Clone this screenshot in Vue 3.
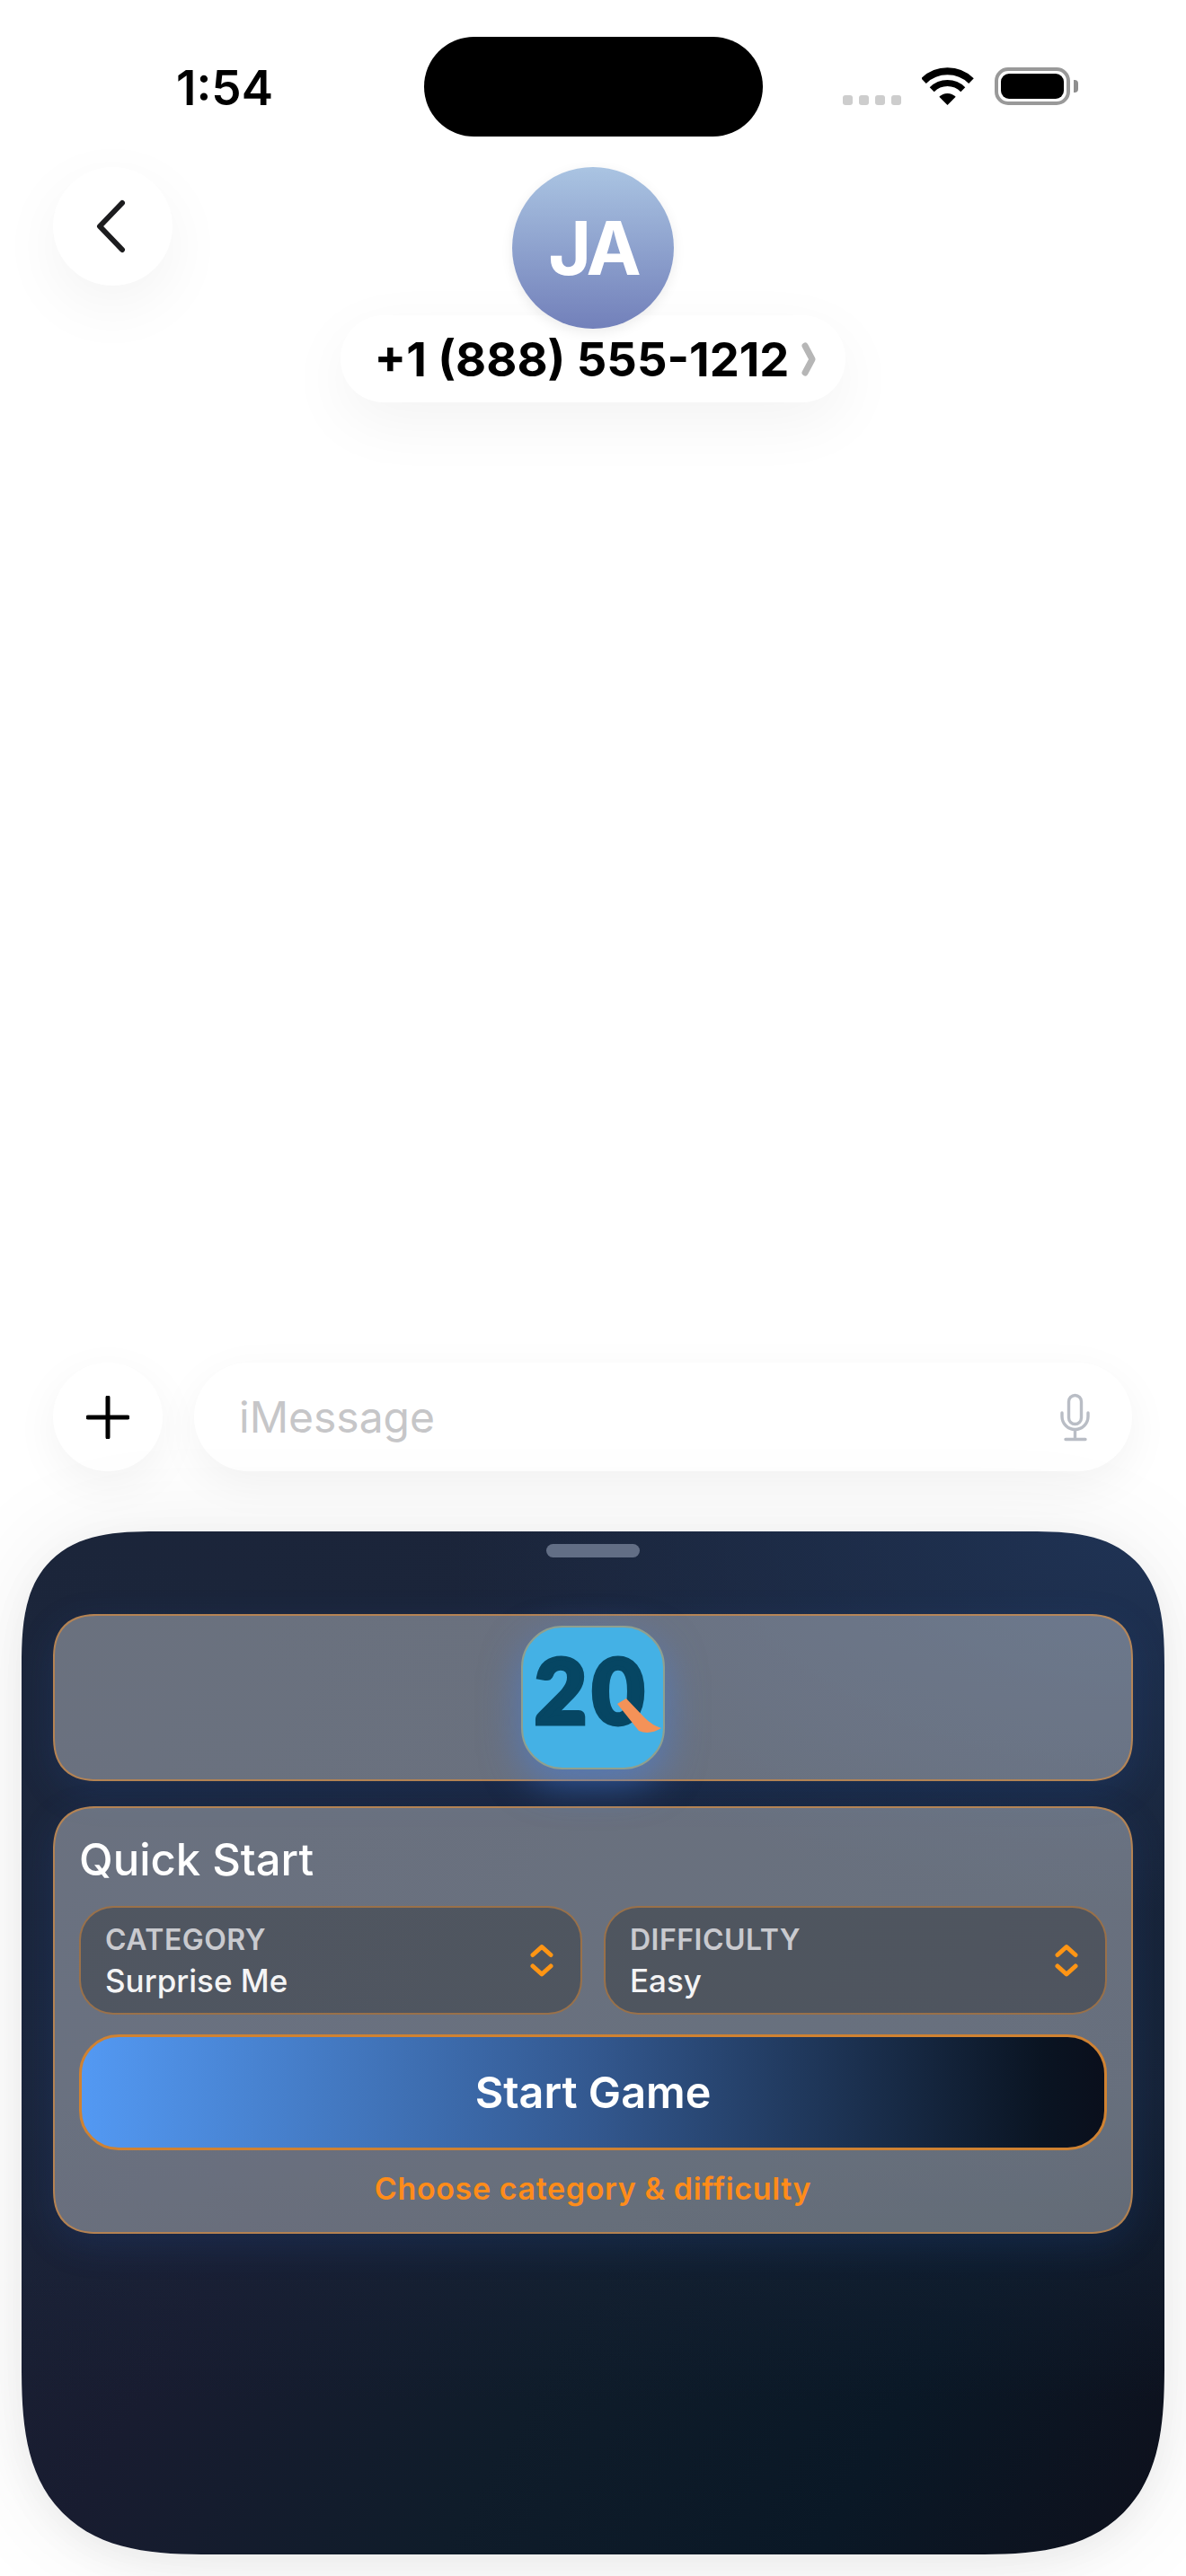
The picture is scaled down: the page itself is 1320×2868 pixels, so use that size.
<script setup>
const selects = [
  { label: 'CATEGORY', value: 'Surprise Me' },
  { label: 'DIFFICULTY', value: 'Easy' },
]
</script>

<template>
  <div class="screen">
    <div class="status">
      <div class="time-wrap"><span class="time">1:54</span></div>
      <div class="island"></div>
      <div class="status-right">
        <div class="dots"><i></i><i></i><i></i><i></i></div>
        <svg class="wifi" width="58" height="42" viewBox="0 0 58 42">
          <path d="M2 15.1 A38 38 0 0 1 55 15.1" fill="none" stroke="#000" stroke-width="8" />
          <path d="M11.2 24.7 A24.5 24.5 0 0 1 45.8 24.7" fill="none" stroke="#000" stroke-width="7" />
          <path d="M28.5 42 L19.3 32.8 A13 13 0 0 1 37.7 32.8 Z" fill="#000" />
        </svg>
        <div class="battery"><div class="battery-fill"></div></div>
        <div class="battery-nub"></div>
      </div>
    </div>

    <header class="head">
      <div class="head-left">
        <button class="round back" aria-label="Back">
          <svg width="36" height="60" viewBox="0 0 36 60">
            <path d="M31 4 L6 30 L31 56" fill="none" stroke="#1c1c1e" stroke-width="6" stroke-linecap="round" stroke-linejoin="round" />
          </svg>
        </button>
      </div>
      <div class="contact">
        <div class="avatar">JA</div>
        <div class="phone">
          <span>+1 (888) 555-1212</span>
          <svg width="16" height="38" viewBox="0 0 16 38">
            <path d="M4 4 L12 19 L4 34" fill="none" stroke="#b6b6b6" stroke-width="7" stroke-linecap="round" stroke-linejoin="round" />
          </svg>
        </div>
      </div>
      <div></div>
    </header>

    <div class="composer">
      <button class="round plus" aria-label="Add">
        <svg width="48" height="48" viewBox="0 0 48 48">
          <path d="M24 2 V46 M2 24 H46" stroke="#000" stroke-width="5" stroke-linecap="round" />
        </svg>
      </button>
      <div class="input">
        <span>iMessage</span>
        <svg width="36" height="54" viewBox="0 0 36 54" fill="none" stroke="#b9bdc5" stroke-width="3.4" stroke-linecap="round">
          <rect x="10.5" y="2.5" width="14" height="32" rx="7" />
          <path d="M3 22 V26 A14.5 14.5 0 0 0 32 26 V22" />
          <path d="M17.5 41 V51 M7 51.5 H29" />
        </svg>
      </div>
    </div>

    <section class="sheet">
      <div class="grabber"></div>
      <div class="card app-row">
        <div class="app-icon">
          <span class="logo-text">20</span>
          <svg class="logo-tail" width="160" height="160" viewBox="0 0 160 160">
            <path d="M107 87 L117 81 L137 102 Q146 111 156 114 Q143 122 131 117 Z" fill="#f49258" />
          </svg>
        </div>
      </div>
      <div class="card quick">
        <h2>Quick Start</h2>
        <div class="selects">
          <div v-for="s in selects" :key="s.label" class="select">
            <div class="select-text">
              <span class="select-label">{{ s.label }}</span>
              <span class="select-value">{{ s.value }}</span>
            </div>
            <svg width="26" height="38" viewBox="0 0 26 38" fill="none" stroke="#ff9514" stroke-width="5" stroke-linecap="round" stroke-linejoin="round">
              <path d="M3 12.5 L13 3.5 L23 12.5 M3 25 L13 34 L23 25" />
            </svg>
          </div>
        </div>
        <button class="start">Start Game</button>
        <p class="hint">Choose category &amp; difficulty</p>
      </div>
    </section>
  </div>
</template>

<style>
html, body { margin: 0; background: #fff; }
</style>

<style scoped>
.screen {
  width: 1320px;
  height: 2868px;
  display: flex;
  flex-direction: column;
  overflow: hidden;
  font-family: Inter, "Noto Sans", sans-serif;
  background: #fff;
}
.status {
  display: grid;
  grid-template-columns: 1fr 377px 1fr;
  padding-top: 41px;
  height: 111px;
  box-sizing: content-box;
}
.time-wrap { padding: 28px 0 0 196px; }
.time { font-size: 53px; line-height: 58px; font-weight: 600; color: #000; display: block; }
.island { background: #000; border-radius: 56px; height: 111px; }
.status-right { display: flex; align-items: flex-start; padding: 34px 0 0 89px; }
.dots { display: flex; gap: 7px; margin-top: 31px; }
.dots i { width: 11px; height: 11px; border-radius: 3px; background: #cdcdcd; }
.wifi { margin-left: 23px; }
.battery {
  margin-left: 23px;
  width: 84px;
  height: 42px;
  box-sizing: border-box;
  border: 4px solid #999;
  border-radius: 15px;
  padding: 3px;
}
.battery-fill { height: 100%; background: #000; border-radius: 9px; }
.battery-nub { width: 5px; height: 14px; margin: 14px 0 0 4px; background: #8f8f8f; border-radius: 0 4px 4px 0; }

.head {
  display: grid;
  grid-template-columns: 1fr auto 1fr;
  margin-top: 34px;
}
.head-left { padding-left: 59px; }
.round {
  border: 0;
  padding: 0;
  background: #fff;
  border-radius: 50%;
  display: flex;
  align-items: center;
  justify-content: center;
}
.back {
  width: 133px;
  height: 132px;
  box-shadow: 0 22px 70px rgba(0, 0, 0, .05);
}
.back svg { margin-left: -6px; }
.contact { display: flex; flex-direction: column; align-items: center; }
.avatar {
  position: relative;
  z-index: 1;
  width: 180px;
  height: 180px;
  border-radius: 50%;
  background: linear-gradient(180deg, #aac4e2, #7280ba);
  color: #fff;
  font-size: 82px;
  letter-spacing: -4px;
  font-weight: 700;
  display: flex;
  align-items: center;
  justify-content: center;
  box-shadow: 0 4px 14px rgba(0, 0, 0, .08);
}
.phone {
  margin-top: -15px;
  width: 562px;
  height: 97px;
  box-sizing: border-box;
  padding-left: 5px;
  border-radius: 48px;
  background: #fff;
  display: flex;
  align-items: center;
  justify-content: center;
  gap: 14px;
  font-size: 52.5px;
  font-weight: 700;
  color: #000;
  box-shadow: 0 22px 70px rgba(0, 0, 0, .05);
}
.composer {
  margin-top: auto;
  display: flex;
  gap: 35px;
  padding: 0 60px 0 59px;
}
.plus {
  flex: none;
  width: 122px;
  height: 121px;
  box-shadow: 0 14px 50px rgba(0, 0, 0, .05);
}
.input {
  flex: 1;
  height: 121px;
  box-sizing: border-box;
  border-radius: 61px;
  background: #fff;
  display: flex;
  align-items: center;
  justify-content: space-between;
  padding: 0 45px 0 50px;
  font-size: 48px;
  color: #c6c6c8;
  box-shadow: 0 14px 50px rgba(0, 0, 0, .05);
}
.sheet {
  margin: 67px 24px 24px;
  height: 1139px;
  box-sizing: border-box;
  padding: 14px 35px 0;
  border-radius: 150px 150px 212px 212px;
  corner-shape: superellipse(1.5);
  background:
    radial-gradient(800px 420px at 100% 0, #1f3355 0%, rgba(31, 51, 85, 0) 100%),
    linear-gradient(180deg, rgba(27, 37, 58, .95) 0%, rgba(27, 40, 64, .7) 55%, rgba(27, 40, 64, 0) 85%),
    linear-gradient(120deg, #1d2639 0%, #181c30 36%, #0f1c2a 58%, #0a1826 80%, #0e101c 100%);
  box-shadow: 0 0 120px rgba(0, 0, 0, .07), 0 12px 40px rgba(0, 0, 0, .05);
}
.grabber {
  width: 104px;
  height: 15px;
  margin: 0 auto 63px;
  border-radius: 8px;
  background: #626e85;
}
.card {
  box-sizing: border-box;
  border: 2px solid rgba(255, 150, 40, .5);
  border-radius: 50px;
  corner-shape: superellipse(1.3);
  background: rgba(255, 255, 255, .35);
  box-shadow: 0 12px 40px rgba(40, 90, 180, .18);
}
.app-row {
  height: 186px;
  display: flex;
  align-items: center;
  justify-content: center;
}
.app-icon {
  position: relative;
  width: 160px;
  height: 160px;
  box-sizing: border-box;
  border: 2px solid #8fa08f;
  border-radius: 46px;
  background: #44b1e5;
  display: flex;
  align-items: center;
  justify-content: flex-start;
  box-shadow: 0 16px 44px rgba(70, 130, 230, .55);
}
.logo-text {
  font-family: Lato, sans-serif;
  font-weight: 900;
  font-size: 100px;
  line-height: 1;
  color: #064663;
  -webkit-text-stroke: 5px #064663;
  margin: 0 0 20px 13px;
  letter-spacing: 6px;
}
.logo-tail { position: absolute; left: -2px; top: -2px; }
.quick {
  margin-top: 28px;
  height: 476px;
  padding: 0 27px;
}
h2 {
  margin: 29px 0 0;
  font-size: 49px;
  line-height: 58px;
  font-weight: 500;
  color: #fff;
}
.selects {
  display: grid;
  grid-template-columns: 1fr 1fr;
  gap: 24px;
  margin-top: 22px;
}
.select {
  box-sizing: border-box;
  height: 121px;
  border: 2.5px solid rgba(255, 149, 40, .42);
  border-radius: 38px;
  background: rgba(0, 0, 0, .24);
  display: flex;
  align-items: center;
  justify-content: space-between;
  padding: 0 30px 0 27px;
}
.select-text { display: flex; flex-direction: column; gap: 6px; }
.select-label { font-size: 32px; line-height: 38px; font-weight: 600; letter-spacing: .5px; color: #c9cacf; }
.select-value { font-size: 35px; line-height: 40px; font-weight: 500; color: #f4f4f5; }
.start {
  display: block;
  width: 100%;
  height: 129px;
  margin-top: 22px;
  border: 3px solid #cf8232;
  border-radius: 44px;
  background: linear-gradient(90deg, #5399f3 0%, #33588f 50%, #0a1422 94%, #0a0f1c 100%);
  color: #fff;
  font-family: inherit;
  font-size: 48.5px;
  font-weight: 600;
}
.hint {
  margin: 22px 0 0;
  text-align: center;
  font-size: 34px;
  line-height: 42px;
  font-weight: 600;
  letter-spacing: .63px;
  color: #ff8c1a;
}
</style>
